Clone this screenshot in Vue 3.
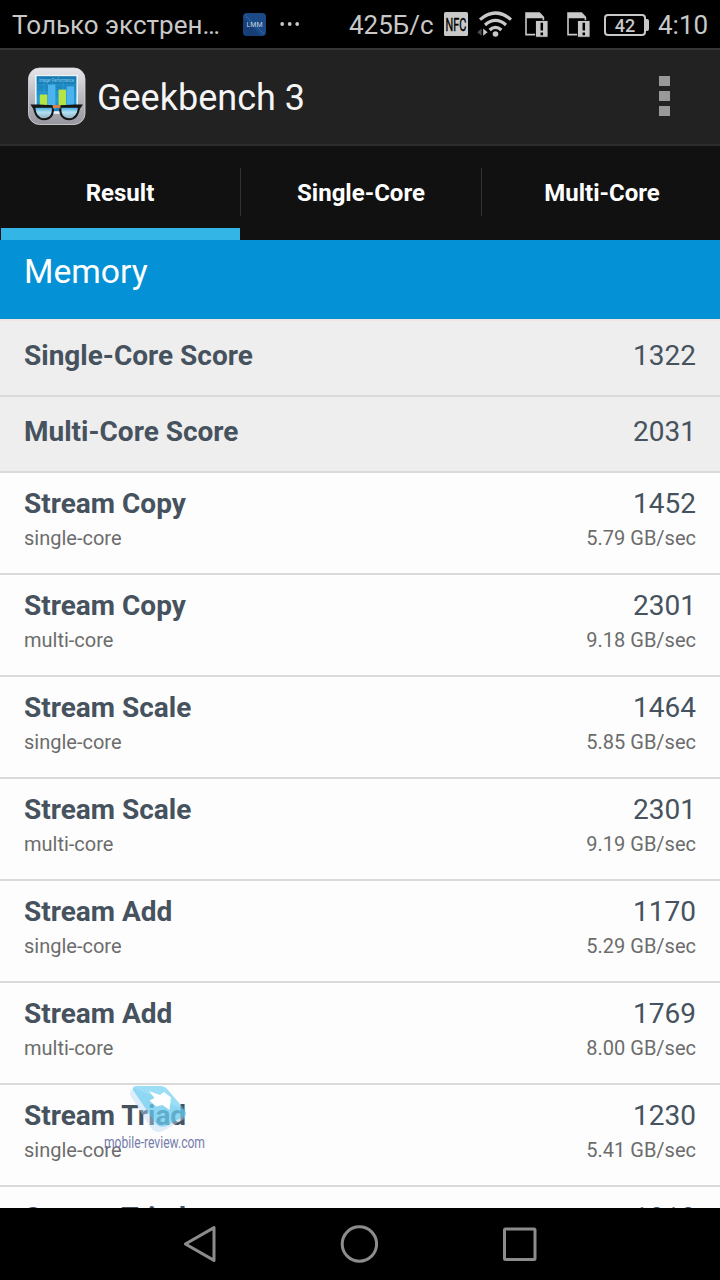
<template>
    <div class="screen">
        <div class="status">
            <span class="carrier">Только экстрен…</span>
            <svg class="lmm" width="23" height="23" viewBox="0 0 23 23">
                <rect width="23" height="23" rx="4" fill="#1c4a86" />
                <path d="M0 4 L18 23 H4 Q0 23 0 19 Z" fill="#163f78" />
                <path d="M2 2 L21 21" stroke="#2f68a6" stroke-width="1" />
                <text x="3.5" y="14.2" font-size="8" textLength="16" lengthAdjust="spacingAndGlyphs" fill="#c3cfdf">LMM</text>
            </svg>
            <svg class="dots" width="20" height="4" viewBox="0 0 20 4">
                <circle cx="2.2" cy="2" r="1.9" />
                <circle cx="9.7" cy="2" r="1.9" />
                <circle cx="17.2" cy="2" r="1.9" />
            </svg>
            <span class="speed">425Б/с</span>
            <svg class="nfc" width="24" height="24" viewBox="0 0 24 24">
                <rect width="24" height="24" rx="1.5" fill="#c8c8c8" />
                <text x="1.6" y="19" font-size="19" textLength="20.8" lengthAdjust="spacingAndGlyphs" fill="#000" stroke="#000" stroke-width=".4">NFC</text>
            </svg>
            <svg class="wifi" width="38" height="28" viewBox="0 0 38 28">
                <g fill="none" stroke="#c8c8c8" stroke-width="3.2">
                    <path d="M4 9.6 Q19.5 -3.6 35 9.6" />
                    <path d="M9 15 Q19.5 5.8 30 15" />
                    <path d="M13.6 20 Q19.5 14.6 25.4 20" />
                </g>
                <circle cx="19.5" cy="24" r="2.8" fill="#c8c8c8" />
                <path d="M5.6 18.6 V25.8 L1.2 22.2 Z" fill="#4b4b4b" />
                <path d="M7.2 18.6 V25.8 L11.6 22.2 Z" fill="#c8c8c8" />
            </svg>
            <svg v-for="n in 2" :key="n" class="sim" width="24" height="26" viewBox="0 0 24 26">
                <path d="M1 1 H14.4 L18.4 5.2 V22.6 H1 Z" fill="#000" stroke="#c8c8c8" stroke-width="1.6" />
                <path d="M1 1 H14.4 L18.4 5.2 V6.2 H1 Z" fill="#c8c8c8" />
                <rect x="10.6" y="8.6" width="12.4" height="16.6" fill="#c8c8c8" stroke="#000" stroke-width=".8" />
                <path d="M16.8 10.8 V18.6 M16.8 20.6 V23.2" stroke="#000" stroke-width="2.5" />
            </svg>
            <div class="battery">42</div>
            <span class="clock">4:10</span>
        </div>

        <div class="bar">
            <svg class="logo" width="60" height="60" viewBox="0 0 60 60">
                <defs>
                    <linearGradient id="plate" x1="0" y1="0" x2="0" y2="1">
                        <stop offset="0" stop-color="#e6e6ea" />
                        <stop offset=".5" stop-color="#b9b9c1" />
                        <stop offset="1" stop-color="#96969f" />
                    </linearGradient>
                    <linearGradient id="chart" x1="0" y1="0" x2="0" y2="1">
                        <stop offset="0" stop-color="#1577b0" />
                        <stop offset=".7" stop-color="#249bd5" />
                        <stop offset="1" stop-color="#2079be" />
                    </linearGradient>
                    <linearGradient id="lens" x1="0" y1="0" x2="0" y2="1">
                        <stop offset="0" stop-color="#2c9bd8" />
                        <stop offset=".45" stop-color="#b4e1f5" />
                        <stop offset="1" stop-color="#8fa9bb" />
                    </linearGradient>
                </defs>
                <rect x="2.5" y="1" width="56.5" height="56.5" rx="11" fill="url(#plate)" stroke="#dcdce0" stroke-width=".8" />
                <rect x="9" y="7.8" width="43" height="39" fill="#e9f4fa" />
                <rect x="10.6" y="9.2" width="39.8" height="35" fill="url(#chart)" />
                <path d="M10.6 18 H50 M10.6 25 H50 M10.6 32 H50 M18 15 V44 M27 15 V44 M37 15 V44" stroke="#45abd9" stroke-width=".4" />
                <text x="13" y="15" font-size="4.6" textLength="35" lengthAdjust="spacingAndGlyphs" fill="#8ccbe8">Integer Performance</text>
                <rect x="13.8" y="27.5" width="7.5" height="14" fill="#b6e445" />
                <rect x="22" y="17.6" width="7.4" height="24" fill="#4db3ee" />
                <rect x="32.6" y="22.6" width="7.4" height="18" fill="#b6e445" />
                <rect x="40.6" y="19.4" width="7.4" height="20" fill="#4db3ee" />
                <path d="M8 39.5 H26.8 Q28 51.8 18 52.2 Q9.4 52.2 8 39.5 Z" fill="url(#lens)" stroke="#171717" stroke-width="2.1" />
                <path d="M34.4 39.5 H53.2 Q51.8 52.2 43.2 52.2 Q33.2 51.8 34.4 39.5 Z" fill="url(#lens)" stroke="#171717" stroke-width="2.1" />
                <path d="M4.4 37.4 L12 37.4 L26 38.2 L27.6 40.5 L10 40.5 L7 41.5 Z M57 37.4 L49 37.4 L35 38.2 L33.6 40.5 L51 40.5 L54.2 41.5 Z" fill="#171717" />
                <path d="M26.8 38 H34.4 V41.6 Q30.6 40 26.8 41.6 Z" fill="#d7834b" />
            </svg>
            <span class="title">Geekbench 3</span>
            <div class="more"><i></i><i></i><i></i></div>
        </div>

        <div class="tabs">
            <div v-for="(tab, i) in tabs" :key="tab" class="tab" :class="{ active: i === 0 }">{{ tab }}</div>
        </div>

        <div class="section">Memory</div>

        <div class="list">
            <div v-for="item in scores" :key="item.name" class="row score">
                <div class="line"><b>{{ item.name }}</b><span>{{ item.value }}</span></div>
            </div>
            <div v-for="(item, i) in results" :key="i" class="row">
                <div class="line"><b>{{ item.name }}</b><span>{{ item.value }}</span></div>
                <div class="line sub"><span>{{ item.mode }}</span><span>{{ item.rate }}</span></div>
            </div>
        </div>

        <div class="nav">
            <svg width="38" height="40" viewBox="0 0 38 40">
                <path d="M34 3.6 V36.4 L5.4 20 Z" />
            </svg>
            <svg width="38" height="40" viewBox="0 0 38 40">
                <circle cx="19.4" cy="20" r="17.2" />
            </svg>
            <svg width="38" height="40" viewBox="0 0 38 40">
                <rect x="4.5" y="5" width="30.5" height="30.5" rx="1" />
            </svg>
        </div>

        <div class="watermark">
            <svg width="60" height="50" viewBox="0 0 60 50">
                <path d="M1 10 Q0 5 5 3 L54 24 Q60 32 52 36 L34 46 Q27 49 22 43 Z" fill="#b9d9f3" fill-opacity=".45" />
                <path d="M4 5 Q3 1 8 1 L31 1 Q36 1 39 5 L56 25 Q59 30 54 32 L37 41 Q31 43 27 39 Z" fill="#4cc4ee" fill-opacity=".55" />
                <path d="M20 6 L31 10 L35 7 L42 12.5 L40.5 25 L33.5 20 L27 21.5 L20.5 15.5 L25.5 13 Z" fill="#fff" />
            </svg>
            <svg width="102" height="20" viewBox="0 0 102 20">
                <text x="0" y="13" font-size="16" textLength="101" lengthAdjust="spacingAndGlyphs" fill="#757cab">mobile-review.com</text>
            </svg>
        </div>
    </div>
</template>
<script setup>
const tabs = ['Result', 'Single-Core', 'Multi-Core'];
const scores = [
    { name: 'Single-Core Score', value: 1322 },
    { name: 'Multi-Core Score', value: 2031 }
];
const results = [
    { name: 'Stream Copy', mode: 'single-core', value: 1452, rate: '5.79 GB/sec' },
    { name: 'Stream Copy', mode: 'multi-core', value: 2301, rate: '9.18 GB/sec' },
    { name: 'Stream Scale', mode: 'single-core', value: 1464, rate: '5.85 GB/sec' },
    { name: 'Stream Scale', mode: 'multi-core', value: 2301, rate: '9.19 GB/sec' },
    { name: 'Stream Add', mode: 'single-core', value: 1170, rate: '5.29 GB/sec' },
    { name: 'Stream Add', mode: 'multi-core', value: 1769, rate: '8.00 GB/sec' },
    { name: 'Stream Triad', mode: 'single-core', value: 1230, rate: '5.41 GB/sec' },
    { name: 'Stream Triad', mode: 'multi-core', value: 1818, rate: '8.07 GB/sec' }
];
</script>
<style>
body {
    margin: 0;
    background: #000;
}
</style>
<style scoped>
.screen {
    position: relative;
    width: 720px;
    height: 1280px;
    display: flex;
    flex-direction: column;
    overflow: hidden;
    background: #000;
    font-family: Roboto, "Liberation Sans", sans-serif;
}

.status {
    height: 48px;
    display: flex;
    align-items: center;
    flex-shrink: 0;
    color: #c8c8c8;
    font-size: 26px;
    white-space: nowrap;
}

.status span {
    padding-top: 2px;
}

.carrier {
    width: 230px;
    padding-left: 12px;
    box-sizing: border-box;
}

.lmm {
    margin-left: 13px;
}

.dots {
    margin-left: 14px;
    fill: #c8c8c8;
}

.speed {
    width: 95px;
    margin-left: 49px;
}

.wifi {
    margin-left: 8px;
}

.sim {
    margin-left: 11px;
    margin-top: 1px;
}

.sim + .sim {
    margin-left: 18px;
}

.battery {
    position: relative;
    box-sizing: border-box;
    width: 42px;
    height: 22px;
    margin-left: 13px;
    margin-top: 2px;
    border: 2px solid #c8c8c8;
    border-radius: 4px;
    font-size: 18px;
    line-height: 19px;
    font-weight: 500;
    text-align: center;
}

.battery::after {
    content: '';
    position: absolute;
    right: -5px;
    top: 3px;
    width: 3px;
    height: 12px;
    background: #c8c8c8;
    border-radius: 0 2px 2px 0;
}

.clock {
    margin-left: 12px;
}

.bar {
    box-sizing: border-box;
    height: 98px;
    flex-shrink: 0;
    display: flex;
    align-items: center;
    padding: 0 50px 0 26px;
    background: #222;
    border-top: 2px solid #363636;
    border-bottom: 2px solid #2c2c2c;
}

.title {
    flex: 1;
    margin-left: 11px;
    padding-top: 2px;
    color: #f5f5f5;
    font-size: 36px;
}

.more {
    display: flex;
    flex-direction: column;
    gap: 5px;
    padding-bottom: 2px;
}

.more i {
    width: 11px;
    height: 10px;
    background: #999;
}

.tabs {
    height: 94px;
    flex-shrink: 0;
    display: flex;
    gap: 1px;
    background: #111;
}

.tab {
    position: relative;
    box-sizing: border-box;
    width: 240px;
    flex-shrink: 0;
    color: #fff;
    font-size: 24px;
    font-weight: bold;
    line-height: 94px;
    text-align: center;
}

.tab + .tab::before {
    content: '';
    position: absolute;
    left: -1px;
    top: 22px;
    width: 1px;
    height: 48px;
    background: #333;
}

.tab.active::after {
    content: '';
    position: absolute;
    left: 1px;
    right: 0;
    bottom: 0;
    height: 12px;
    background: #33b5e5;
}

.section {
    box-sizing: border-box;
    height: 79px;
    flex-shrink: 0;
    padding: 12px 24px 0;
    background: #0491d5;
    color: #fff;
    font-size: 33.7px;
    line-height: 40px;
}

.list {
    flex: 1;
    overflow: hidden;
    background: #fdfdfd;
    border-top: 2px solid #efe6e4;
}

.row {
    box-sizing: border-box;
    height: 102px;
    padding: 14px 24px 0;
    border-bottom: 2px solid #dadada;
}

.row.score {
    height: 76px;
    padding-top: 18px;
    background: #eee;
}

.line {
    display: flex;
    justify-content: space-between;
    color: #46525e;
    font-size: 28px;
    line-height: 34px;
}

.line.sub {
    color: #6c6c6c;
    font-size: 20px;
    line-height: 24px;
    margin-top: 5px;
}

.nav {
    height: 72px;
    flex-shrink: 0;
    display: flex;
    justify-content: center;
    align-items: center;
    gap: 122px;
    padding-right: 2px;
    background: #000;
}

.nav svg {
    fill: none;
    stroke: #8c8c8c;
    stroke-width: 3;
    stroke-linejoin: round;
}

.watermark {
    position: absolute;
    left: 104px;
    top: 1085px;
    width: 102px;
    display: flex;
    flex-direction: column;
}

.watermark svg:first-child {
    margin-left: 25px;
}
</style>
